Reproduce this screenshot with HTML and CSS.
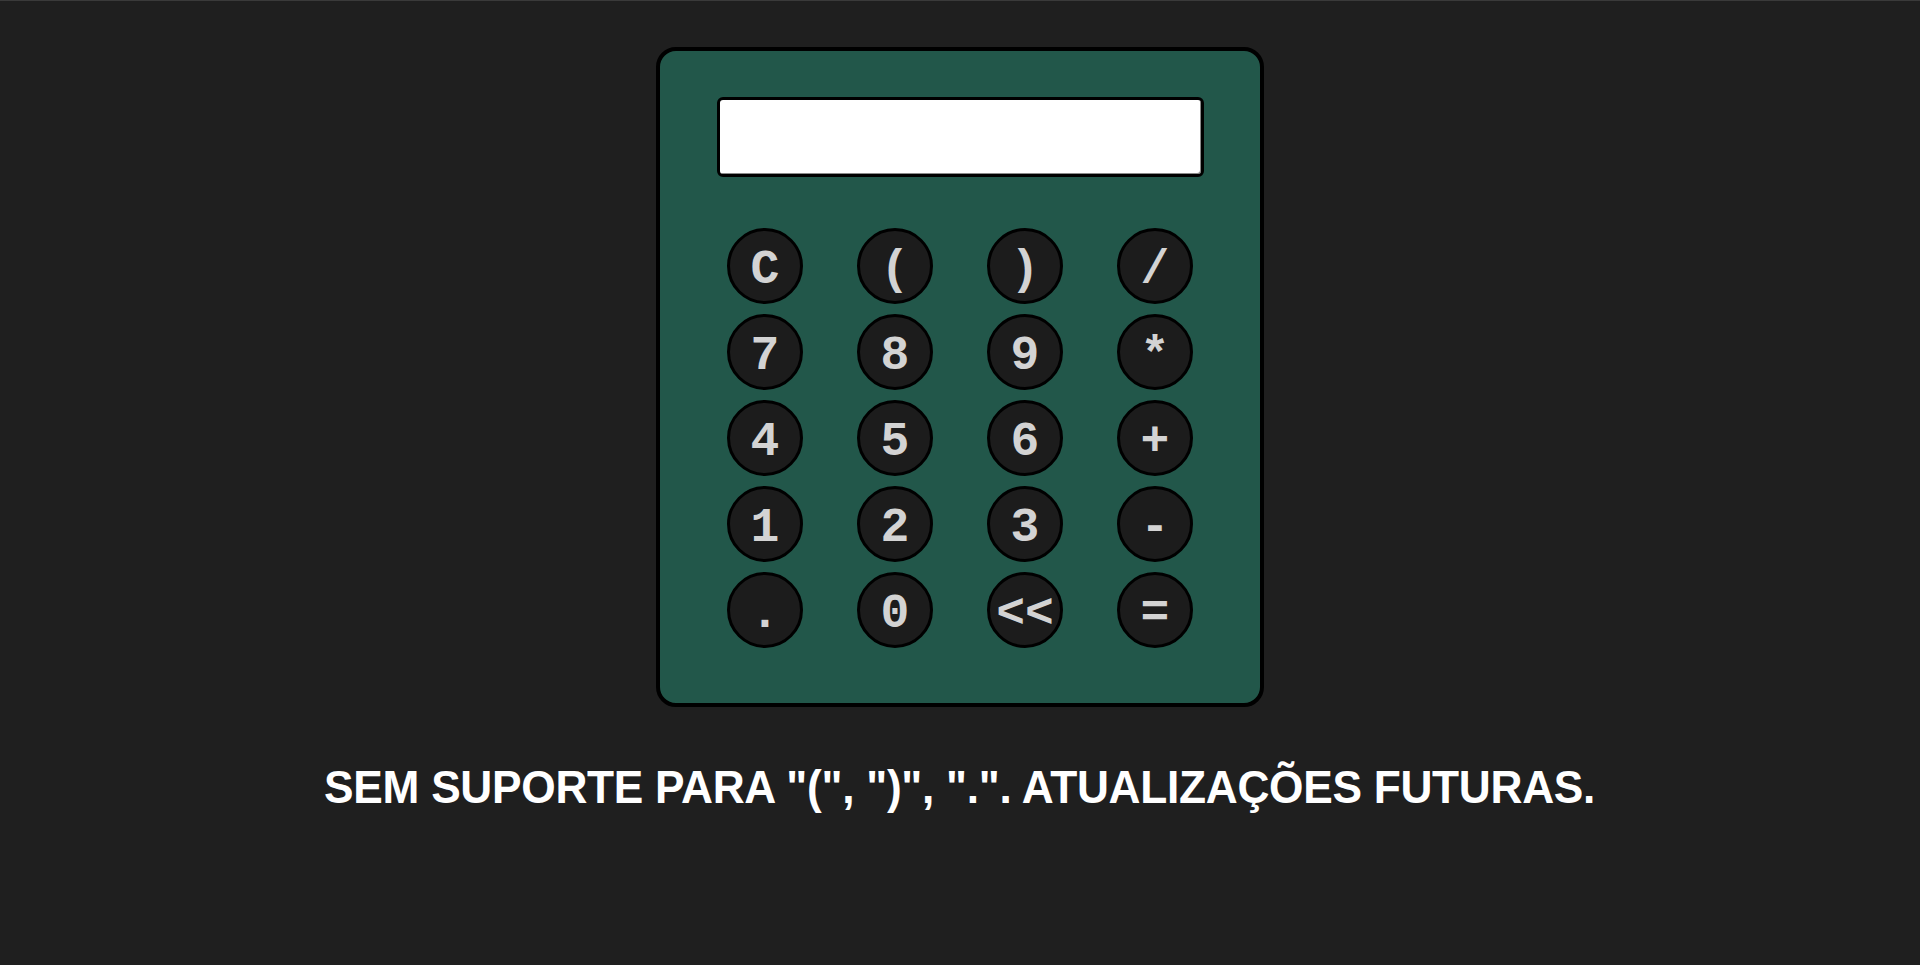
FILE: index.html
```html
<!DOCTYPE html>
<html lang="pt-BR">
<head>
<meta charset="utf-8">
<title>Calculadora</title>
<link rel="stylesheet" href="styles.css">
</head>
<body>
<main class="page">
  <div class="calc">
    <input class="display" type="text" readonly>
    <div class="keys">
      <button class="key">C</button>
      <button class="key">(</button>
      <button class="key">)</button>
      <button class="key">/</button>
      <button class="key">7</button>
      <button class="key">8</button>
      <button class="key">9</button>
      <button class="key">*</button>
      <button class="key">4</button>
      <button class="key">5</button>
      <button class="key">6</button>
      <button class="key">+</button>
      <button class="key">1</button>
      <button class="key">2</button>
      <button class="key">3</button>
      <button class="key">-</button>
      <button class="key">.</button>
      <button class="key">0</button>
      <button class="key">&lt;&lt;</button>
      <button class="key">=</button>
    </div>
  </div>
  <h1 class="note">SEM SUPORTE PARA "(", ")", ".". ATUALIZAÇÕES FUTURAS.</h1>
</main>
</body>
</html>
```

FILE: styles.css
```css
html, body {
  margin: 0;
  padding: 0;
  background: #1f1f1f;
}

body {
  border-top: 1px solid #3a3a3a;
  min-height: 964px;
}

.page {
  display: flex;
  flex-direction: column;
  align-items: center;
  padding-top: 46px;
}

.calc {
  box-sizing: border-box;
  width: 608px;
  height: 660px;
  background: #22574a;
  border: 4px solid #000;
  border-radius: 20px;
  display: flex;
  flex-direction: column;
  align-items: center;
  padding-top: 46px;
}

.display {
  box-sizing: border-box;
  width: 487px;
  height: 80px;
  margin: 0;
  padding: 0 10px;
  background: #fff;
  border: 3px solid #000;
  border-radius: 6px;
  box-shadow: inset -1px -1px 0 #8a8a8a;
  outline: none;
  font-family: "Liberation Mono", monospace;
  font-size: 32px;
}

.keys {
  margin-top: 51px;
  display: grid;
  grid-template-columns: repeat(4, 76px);
  grid-auto-rows: 76px;
  column-gap: 54px;
  row-gap: 10px;
}

.key {
  box-sizing: border-box;
  width: 76px;
  height: 76px;
  margin: 0;
  padding: 8px 0 0;
  border: 3px solid #000;
  border-radius: 50%;
  background: #1c1c1c;
  color: #d3d3d3;
  font-family: "Liberation Mono", monospace;
  font-weight: bold;
  font-size: 48px;
  line-height: 1;
  display: flex;
  align-items: center;
  justify-content: center;
  cursor: pointer;
}

.note {
  margin: 56px 0 0;
  color: #fff;
  font-family: "Liberation Sans", Arial, sans-serif;
  font-weight: bold;
  font-size: 46px;
  line-height: 49px;
  letter-spacing: -0.3px;
  text-align: center;
  white-space: nowrap;
  transform: scaleX(0.962);
}
```
